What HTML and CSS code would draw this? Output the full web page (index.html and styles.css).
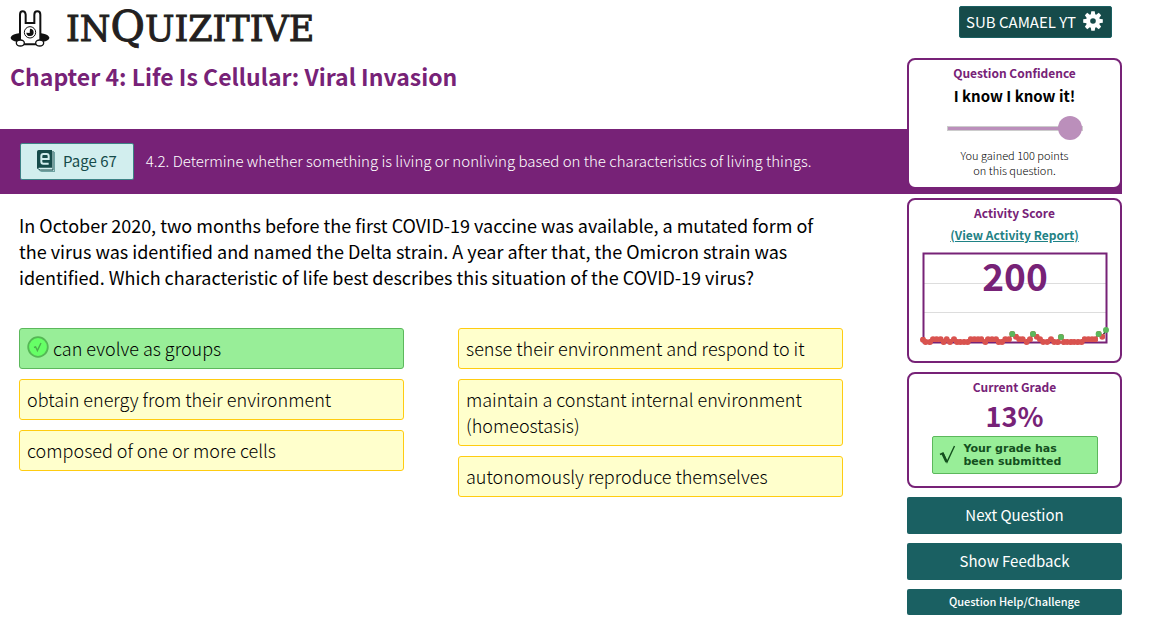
FILE: index.html
```html
<!DOCTYPE html>
<html lang="en">
<head>
<meta charset="utf-8">
<title>InQuizitive</title>
<meta name="viewport" content="width=device-width, initial-scale=1">
<link rel="stylesheet" href="styles.css">
</head>
<body>
<div class="page">
  <header class="masthead">
    <div class="brand">
      <svg class="brand-mark" width="40" height="38" viewBox="0 0 120 114" aria-hidden="true">
        <ellipse cx="60" cy="83" rx="58" ry="17" fill="#111"/>
        <path d="M30 88V14Q30 4 38 4T47 14V39H73V14Q73 4 82 4T91 14V88Q91 99 84 103H37Q30 99 30 88Z" fill="#fff" stroke="#111" stroke-width="6"/>
        <circle cx="60" cy="67" r="17" fill="#fff" stroke="#111" stroke-width="3"/>
        <path d="M60 56A11 11 0 1 1 49 68L59 69Z" fill="#111"/>
        <ellipse cx="31" cy="99" rx="12" ry="9" fill="#fff" stroke="#111" stroke-width="4"/>
        <ellipse cx="89" cy="99" rx="12" ry="9" fill="#fff" stroke="#111" stroke-width="4"/>
      </svg>
      <span class="brand-name">IN<span class="brand-q">Q</span>UIZITIVE</span>
    </div>
    <h1 class="chapter">Chapter 4: Life Is Cellular: Viral Invasion</h1>
  </header>

  <section class="objective">
    <button class="ebook" type="button">
      <svg width="18" height="22" viewBox="0 0 54 66" aria-hidden="true">
        <path d="M8 6H54V66H14Q6 66 4 58Z" fill="#6fa3a3"/>
        <path d="M5 3H51V62H12Q4 62 2 56Z" fill="#d2eeee"/>
        <path d="M48 3V60H10Q4 59 3 55" fill="none" stroke="#164b4a" stroke-width="3"/>
        <path d="M0 5Q0 0 5 0H45V53H6Q3 53 3 57L0 55Z" fill="#164b4a"/>
        <path d="M35 41H19Q13 41 13 35V18Q13 12 19 12H29Q35 12 35 18V27H15" fill="none" stroke="#d2eeee" stroke-width="6"/>
      </svg>
      <span>Page 67</span>
    </button>
    <p class="objective-text">4.2. Determine whether something is living or nonliving based on the characteristics of living things.</p>
  </section>

  <main class="question">
    <p class="prompt">In October 2020, two months before the first COVID-19 vaccine was available, a mutated form of the virus was identified and named the Delta strain. A year after that, the Omicron strain was identified. Which characteristic of life best describes this situation of the COVID-19 virus?</p>
    <div class="answers">
      <div class="answer-column">
        <button class="answer correct" type="button">
          <svg class="tick" width="22" height="22" viewBox="0 0 22 22" aria-hidden="true">
            <circle cx="11" cy="11" r="9.8" fill="#66ff66" stroke="#55b855" stroke-width="1.8"/>
            <path d="M7 11.5L8.6 10.8L10.4 14.6L14 7" fill="none" stroke="#4cae4c" stroke-width="1.4"/>
          </svg>
          <span>can evolve as groups</span>
        </button>
        <button class="answer" type="button">obtain energy from their environment</button>
        <button class="answer" type="button">composed of one or more cells</button>
      </div>
      <div class="answer-column">
        <button class="answer" type="button">sense their environment and respond to it</button>
        <button class="answer" type="button">maintain a constant internal environment (homeostasis)</button>
        <button class="answer" type="button">autonomously reproduce themselves</button>
      </div>
    </div>
  </main>

  <aside class="sidebar">
    <button class="account" type="button">
      <span>SUB CAMAEL YT</span>
      <svg width="20" height="20" viewBox="-10 -10 20 20" aria-hidden="true">
        <g fill="#fff">
          <path id="cog" d="M-2.3 -6L-1.7 -9.8H1.7L2.3 -6V6L1.7 9.8H-1.7L-2.3 6Z"/>
          <use href="#cog" transform="rotate(45)"/>
          <use href="#cog" transform="rotate(90)"/>
          <use href="#cog" transform="rotate(135)"/>
          <circle r="7"/>
        </g>
        <circle r="2.8" fill="#164b4a"/>
      </svg>
    </button>

    <section class="card confidence">
      <h2 class="card-title"><label for="confidence">Question Confidence</label></h2>
      <p class="confidence-level">I know I know it!</p>
      <input class="slider" id="confidence" type="range" min="0" max="100" value="100" disabled>
      <p class="gain">You gained 100 points<br>on this question.</p>
    </section>

    <section class="card score">
      <h2 class="card-title">Activity Score</h2>
      <a class="report" href="#report">(View Activity Report)</a>
      <svg class="chart" width="192" height="106" viewBox="0 -10 192 106" role="img" aria-label="Activity score 200">
        <defs>
          <marker id="dot" markerUnits="userSpaceOnUse" markerWidth="18" markerHeight="18" refX="9" refY="9"><circle cx="9" cy="9" r="9" fill="#d9534f"/></marker>
        </defs>
        <path d="M4 33.5H188M4 62.5H188" stroke="#ddd"/>
        <rect x="4.5" y="3.5" width="183" height="89" fill="none" stroke="#772277" stroke-width="2"/>
        <g transform="translate(-19 -55) scale(.3333)">
          <polyline fill="none" stroke="#222" stroke-width="4" marker-start="url(#dot)" marker-mid="url(#dot)" points="69,434 77,441 90,441 99,433 110,433 122,433 131,441 140,433 150,441 162,433 171,441 181,441 192,441 203,441 212,433 223,433 234,433 244,433 256,441 264,433 276,433 288,433 296,441 306,441 316,433 327,433 337,417 348,425 358,433 368,433 380,441 390,433 399,417 410,425 420,433 430,441 442,441 453,433 463,441 474,441 483,426 492,441 502,441 513,441 523,441 534,441 545,441 554,433 565,433 576,433 586,433 596,417 607,425 618,405"/>
          <g fill="#5cb85c"><circle cx="337" cy="417" r="9"/><circle cx="399" cy="417" r="9"/><circle cx="483" cy="426" r="9"/><circle cx="596" cy="417" r="9"/><circle cx="618" cy="405" r="9"/></g>
        </g>
        <text class="chart-value" x="96" y="41" text-anchor="middle">200</text>
      </svg>
    </section>

    <section class="card grade">
      <h2 class="card-title">Current Grade</h2>
      <p class="grade-value">13%</p>
      <p class="submitted">
        <svg width="17" height="20" viewBox="0 0 17 20" aria-hidden="true"><path d="M1 9.5L4 8L8 17L15.5 1" fill="none" stroke="#14501e" stroke-width="1.4"/><path d="M3.4 8.2L7.6 17" stroke="#14501e" stroke-width="2.6"/></svg>
        <span>Your grade has<br>been submitted</span>
      </p>
    </section>

    <button class="action" type="button">Next Question</button>
    <button class="action" type="button">Show Feedback</button>
    <button class="action small" type="button">Question Help/Challenge</button>
  </aside>
</div>
</body>
</html>
```
FILE: styles.css
```css
:root {
  --purple: #772277;
  --teal: #1a6062;
  --teal-dark: #164b4a;
}

* { box-sizing: border-box; }

body {
  margin: 0;
  background: #fff;
  color: #000;
  font-family: "Noto Sans CJK SC", "Noto Sans", sans-serif;
}

h1, h2, p { margin: 0; }

button {
  margin: 0;
  font: inherit;
  cursor: pointer;
}

.page {
  display: grid;
  grid-template-columns: minmax(0, 1fr) 215px;
  grid-template-rows: auto auto 1fr;
  padding-right: 30px;
}

.masthead {
  grid-column: 1;
  grid-row: 1;
  padding: 8px 10px 36px;
}

.brand {
  display: flex;
  gap: 16px;
  height: 44px;
}

.brand-mark { margin-top: 2px; }

.brand-name {
  color: #231f20;
  font-family: "DejaVu Serif", serif;
  font-size: 35px;
  line-height: 42px;
  -webkit-text-stroke: 1px #231f20;
}

.brand-q { font-size: 42px; line-height: 0; }

.chapter {
  padding-top: 7px;
  color: var(--purple);
  font-size: 23px;
  font-weight: 700;
  line-height: 34px;
}

.objective {
  grid-column: 1 / -1;
  grid-row: 2;
  display: flex;
  align-items: center;
  gap: 12px;
  min-height: 65px;
  padding: 14px 227px 14px 20px;
  background: var(--purple);
  color: #fff;
}

.ebook {
  display: flex;
  flex: none;
  align-items: center;
  gap: 8px;
  height: 37px;
  padding: 0 16px 2px;
  border: 1px solid #3d8285;
  border-radius: 2px;
  background: #d2eeee;
  color: var(--teal-dark);
  font-size: 15px;
}

.objective-text {
  padding-bottom: 2px;
  font-size: 15px;
  font-weight: 300;
  line-height: 24px;
}

.question {
  grid-column: 1;
  grid-row: 3;
  padding: 18px 64px 24px 19px;
}

.prompt {
  font-size: 18px;
  line-height: 26px;
}

.answers {
  display: grid;
  grid-template-columns: 1fr 1fr;
  gap: 54px;
  padding-top: 38px;
}

.answer-column {
  display: flex;
  flex-direction: column;
  gap: 10px;
}

.answer {
  display: flex;
  align-items: center;
  gap: 4px;
  padding: 6px 7px 7px;
  border: 1px solid #ffcc11;
  border-radius: 3px;
  background: #ffffcc;
  color: #000;
  font-size: 18px;
  font-weight: 300;
  line-height: 26px;
  text-align: left;
}

.answer.correct {
  border-color: #5cb85c;
  background: #98ee98;
}

.tick { margin-bottom: 2px; }

.sidebar {
  grid-column: 2;
  grid-row: 1 / -1;
  display: flex;
  flex-direction: column;
  gap: 9px;
  padding: 6px 0 14px;
}

.account {
  display: flex;
  align-items: center;
  align-self: flex-end;
  gap: 7px;
  height: 32px;
  margin: 0 10px 11px 0;
  padding: 0 8px 2px 6px;
  border: 1px solid var(--teal);
  border-radius: 2px;
  background: var(--teal-dark);
  color: #fff;
  font-size: 15px;
}

.card {
  display: flex;
  flex-direction: column;
  align-items: center;
  border: 2px solid var(--purple);
  border-radius: 8px;
  background: #fff;
  text-align: center;
}

.card-title {
  padding-top: 4px;
  color: var(--purple);
  font-size: 12px;
  font-weight: 700;
  line-height: 18px;
}

.confidence { min-height: 131px; }

.confidence-level {
  font-size: 15px;
  font-weight: 700;
  line-height: 28px;
}

.slider {
  width: 136px;
  height: 24px;
  margin: 6px 0 8px;
  appearance: none;
  background: none;
}

.slider::-webkit-slider-runnable-track {
  height: 5px;
  border: 1px solid #ccc;
  background: #bb8fbb;
}

.slider::-webkit-slider-thumb {
  width: 24px;
  height: 24px;
  margin-top: -11px;
  appearance: none;
  border-radius: 50%;
  background: #bb8fbb;
}

.gain {
  font-size: 11px;
  font-weight: 300;
  line-height: 15px;
}

.score { min-height: 165px; }

.report {
  color: #1f8285;
  font-size: 12px;
  font-weight: 700;
  line-height: 26px;
}

.chart {
  display: block;
  margin-top: -8px;
  pointer-events: none;
}

.chart-value {
  fill: var(--purple);
  font-size: 37px;
  font-weight: 700;
}

.grade { min-height: 116px; }

.grade-value {
  color: var(--purple);
  font-size: 27px;
  font-weight: 700;
  line-height: 40px;
}

.submitted {
  display: flex;
  align-items: center;
  gap: 8px;
  width: 166px;
  height: 38px;
  padding: 0 6px;
  border: 1px solid #5cb85c;
  border-radius: 2px;
  background: #98ee98;
  color: #14501e;
  font-family: "DejaVu Sans", sans-serif;
  font-size: 11px;
  font-weight: 700;
  line-height: 13px;
  text-align: left;
}

.action {
  min-height: 37px;
  padding: 0 0 2px;
  border: 0;
  border-radius: 2px;
  background: var(--teal);
  color: #fff;
  font-size: 15px;
}

.action.small {
  min-height: 26px;
  font-size: 11px;
  font-weight: 500;
}
```
